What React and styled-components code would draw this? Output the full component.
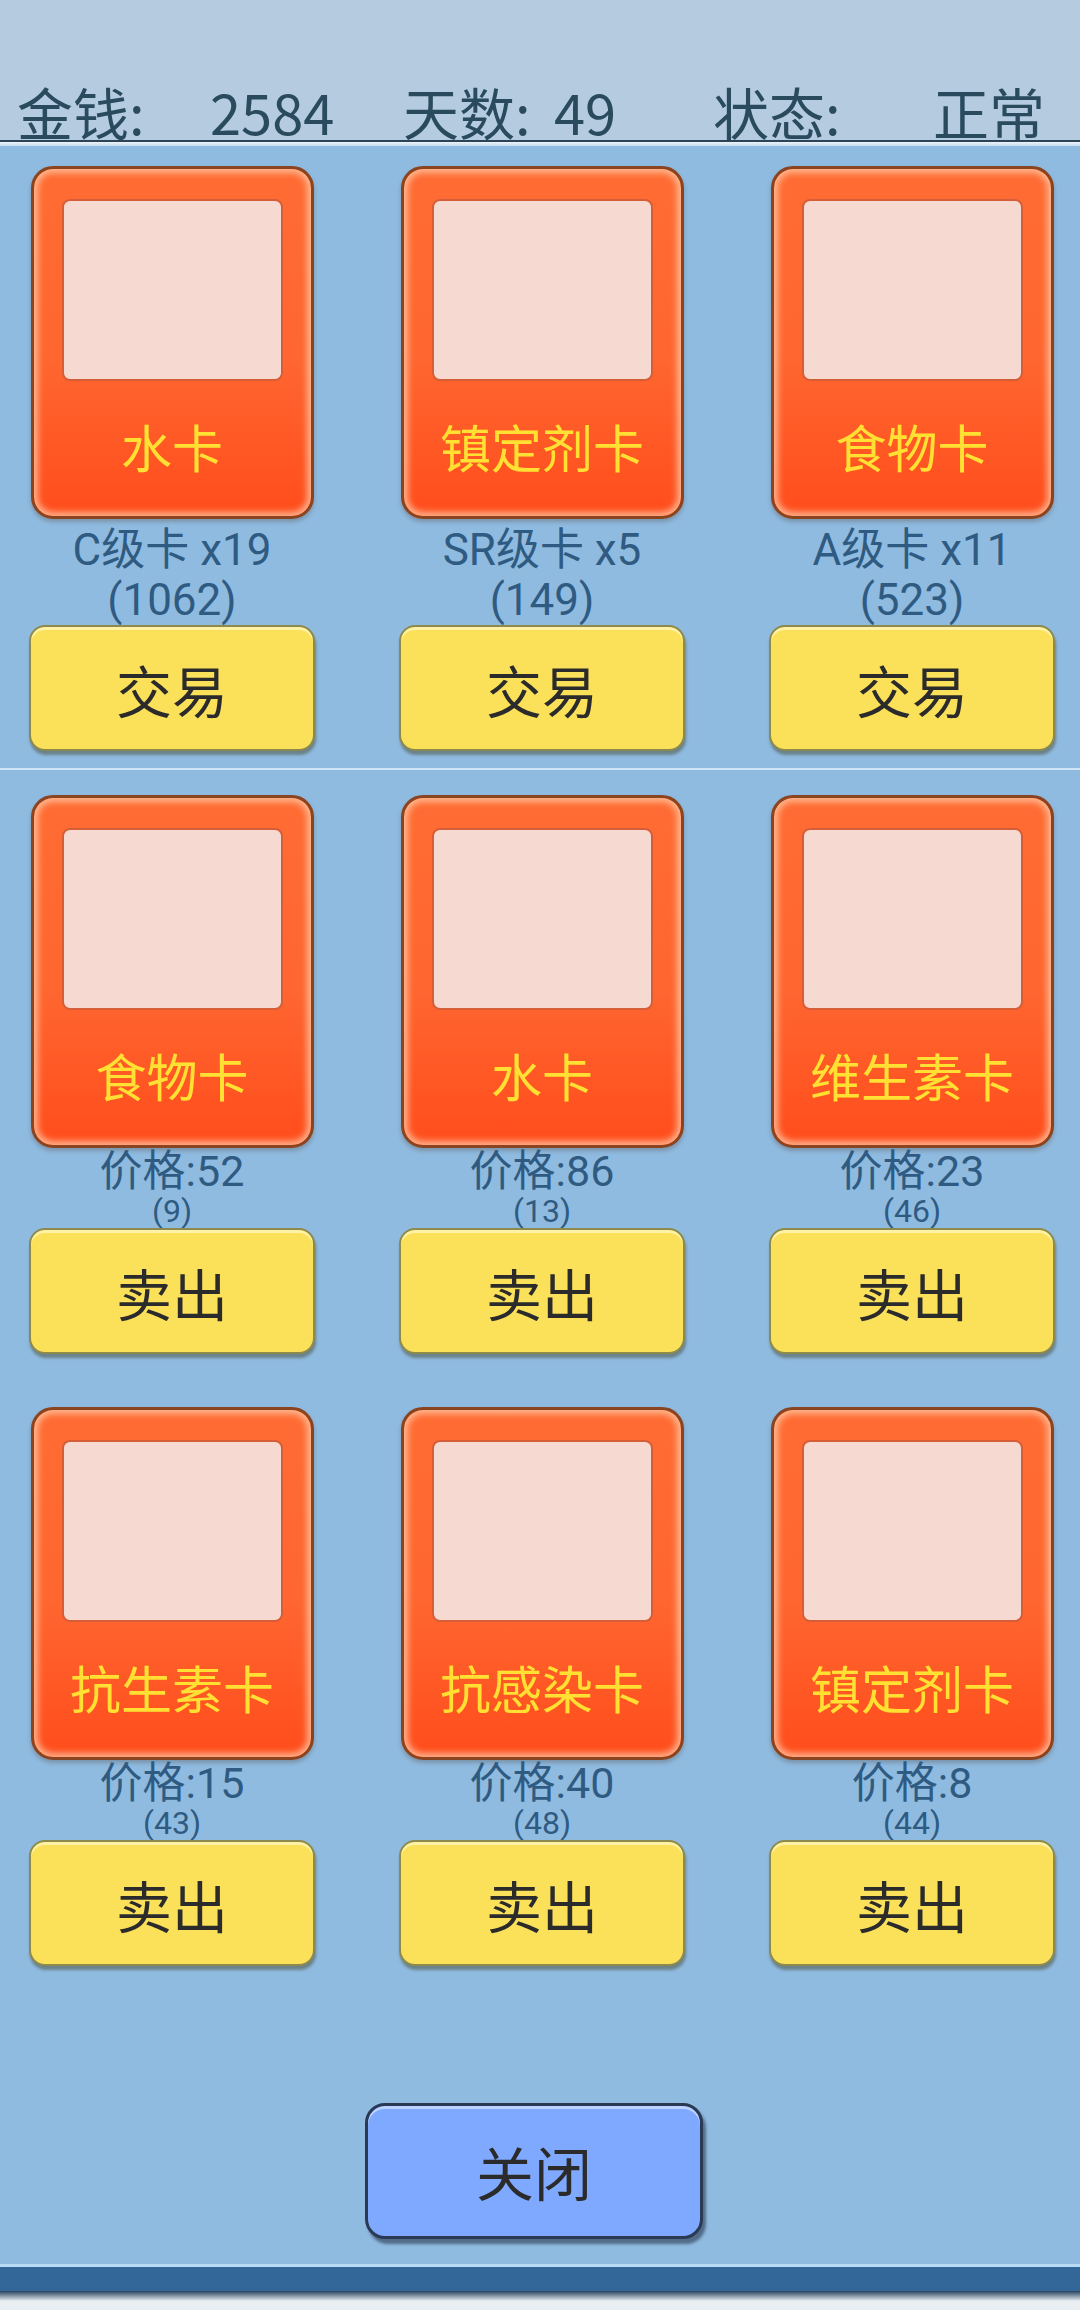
import React from 'react';
import styled, { createGlobalStyle } from 'styled-components';

const GlobalStyle = createGlobalStyle`
  html, body {
    margin: 0;
    padding: 0;
    background: #90bbe0;
  }
  * {
    box-sizing: border-box;
  }
`;

const Page = styled.div`
  width: 1080px;
  height: 2310px;
  display: flex;
  flex-direction: column;
  background: #90bbe0;
  font-family: 'Noto Sans CJK SC', sans-serif;
  overflow: hidden;
`;

const HeaderBar = styled.div`
  height: 142px;
  background: #b5cce0;
  border-bottom: 2px solid #2c4456;
  display: grid;
  grid-template-columns: 193px 193px 151px 159px 220px auto;
  align-items: end;
  padding-left: 17px;
  overflow: hidden;
`;

const HeaderText = styled.span`
  font-size: 56px;
  line-height: 1;
  color: #2a4a5e;
  margin-bottom: 1px;
  white-space: nowrap;
`;

const Sheen = styled.div`
  height: 4px;
  background: linear-gradient(#eef5fb, #c4dbee);
`;

const CardGrid = styled.div`
  display: grid;
  grid-template-columns: repeat(3, 286px);
  column-gap: 84px;
  row-gap: ${(p) => p.$rowGap || 0}px;
  padding-left: 29px;
  margin-top: ${(p) => p.$top}px;
`;

const Cell = styled.div`
  display: flex;
  flex-direction: column;
  align-items: center;
`;

const CardFrame = styled.div`
  width: 283px;
  height: 353px;
  border: 3px solid #8a4520;
  border-radius: 22px;
  background: linear-gradient(#ff6c33 0%, #ff6630 55%, #ff4d1c 100%);
  box-shadow: inset 0 0 6px 4px rgba(255, 200, 165, 0.8),
    0 3px 4px rgba(60, 30, 10, 0.25);
  padding: 30px 28px 0 28px;
  display: flex;
  flex-direction: column;
`;

const Picture = styled.div`
  height: 182px;
  background: #f6dad2;
  border: 2px solid #d55e38;
  border-radius: 8px;
`;

const CardName = styled.div`
  flex: 1;
  display: flex;
  align-items: center;
  justify-content: center;
  color: #ffe033;
  font-size: 51px;
  line-height: 1;
  white-space: nowrap;
  padding-bottom: 4px;
`;

const InfoLine = styled.div`
  color: #2f5b82;
  font-family: Roboto, 'Noto Sans CJK SC', sans-serif;
  font-size: ${(p) => p.$size}px;
  line-height: ${(p) => p.$lh}px;
  height: ${(p) => p.$lh}px;
  margin-top: ${(p) => p.$top || 0}px;
  white-space: nowrap;
  text-align: center;
`;

const ActionButton = styled.button`
  width: 286px;
  height: 126px;
  background: #fbe05a;
  border: 2px solid #8c8a4c;
  border-radius: 16px;
  box-shadow: inset 0 3px 0 #fff2a6, 1px 4px 3px rgba(60, 60, 30, 0.45);
  font-family: 'Noto Sans CJK SC', sans-serif;
  font-size: 56px;
  color: #2b2b2b;
  padding: 0;
  position: relative;
  z-index: 1;
`;

const Divider = styled.div`
  height: 2px;
  margin-top: 17px;
  background: #cfe4f4;
`;

const Footer = styled.div`
  display: flex;
  justify-content: center;
  padding-right: 12px;
  margin-top: 137px;
`;

const CloseButton = styled.button`
  width: 338px;
  height: 136px;
  background: #7ea9ff;
  border: 3px solid #2a3a55;
  border-radius: 20px;
  box-shadow: inset 0 3px 0 #bcd3ff, 3px 5px 3px rgba(20, 30, 50, 0.5);
  font-family: 'Noto Sans CJK SC', sans-serif;
  font-size: 58px;
  color: #2b2b2b;
  padding: 0;
`;

const BottomBar = styled.div`
  margin-top: 25px;
  height: 27px;
  background: #336699;
  border-top: 3px solid #b8daf5;
`;

const BarShadow = styled.div`
  height: 10px;
  background: linear-gradient(#26425f, #e8eef2);
`;

const BarBase = styled.div`
  flex: 1;
  background: #e8eef2;
`;

const stock = [
  { name: '水卡', grade: 'C级卡 x19', count: '(1062)' },
  { name: '镇定剂卡', grade: 'SR级卡 x5', count: '(149)' },
  { name: '食物卡', grade: 'A级卡 x11', count: '(523)' },
];

const market = [
  { name: '食物卡', price: 52, count: 9 },
  { name: '水卡', price: 86, count: 13 },
  { name: '维生素卡', price: 23, count: 46 },
  { name: '抗生素卡', price: 15, count: 43 },
  { name: '抗感染卡', price: 40, count: 48 },
  { name: '镇定剂卡', price: 8, count: 44 },
];

const Card = ({ name }) => (
  <CardFrame>
    <Picture />
    <CardName>{name}</CardName>
  </CardFrame>
);

export default function App() {
  return (
    <>
      <GlobalStyle />
      <Page>
        <HeaderBar>
          <HeaderText>金钱:</HeaderText>
          <HeaderText>2584</HeaderText>
          <HeaderText>天数:</HeaderText>
          <HeaderText>49</HeaderText>
          <HeaderText>状态:</HeaderText>
          <HeaderText>正常</HeaderText>
        </HeaderBar>
        <Sheen />

        <CardGrid $top={20}>
          {stock.map((c) => (
            <Cell key={c.name}>
              <Card name={c.name} />
              <InfoLine $size={44} $lh={50} $top={6}>
                {c.grade}
              </InfoLine>
              <InfoLine $size={44} $lh={50}>
                {c.count}
              </InfoLine>
              <ActionButton>交易</ActionButton>
            </Cell>
          ))}
        </CardGrid>

        <Divider />

        <CardGrid $top={25} $rowGap={53}>
          {market.map((c, i) => (
            <Cell key={i}>
              <Card name={c.name} />
              <InfoLine $size={43} $lh={46}>
                价格:{c.price}
              </InfoLine>
              <InfoLine $size={32} $lh={34}>
                ({c.count})
              </InfoLine>
              <ActionButton>卖出</ActionButton>
            </Cell>
          ))}
        </CardGrid>

        <Footer>
          <CloseButton>关闭</CloseButton>
        </Footer>

        <BottomBar />
        <BarShadow />
        <BarBase />
      </Page>
    </>
  );
}
